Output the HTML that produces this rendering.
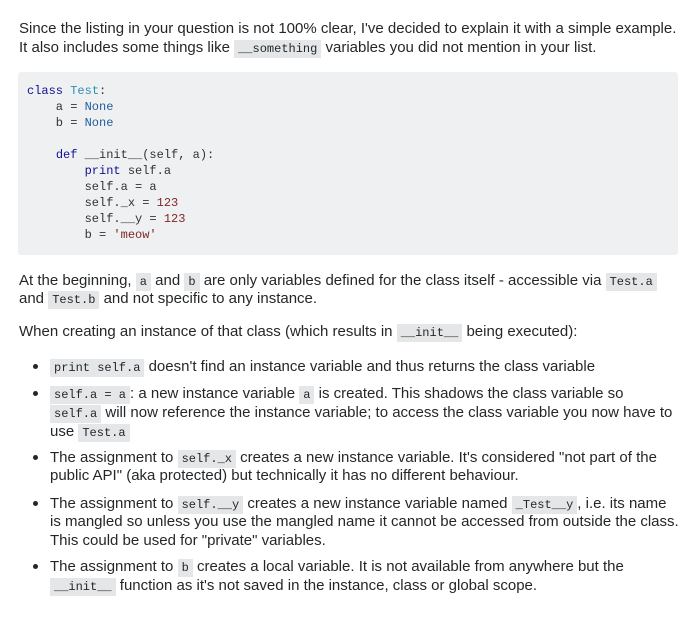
<!DOCTYPE html><html><head><style>
body{margin:0;width:698px;height:617px;background:#fff;font-family:"Liberation Sans",sans-serif;font-size:15px;color:#242729;position:relative;overflow:hidden}
.l{position:absolute;left:19px;white-space:nowrap;line-height:19px}
code{font-family:"Liberation Mono",monospace;font-size:12px;background:#e4e6e8;padding:2px 4px;color:#242729}
pre{position:absolute;left:18px;top:72px;width:660px;height:183px;margin:0;background:#eff0f1;border-radius:3px;font-family:"Liberation Mono",monospace;font-size:12px;line-height:16px;color:#303336;padding:11px 0 0 9px;box-sizing:border-box}
.k{color:#101094}.t{color:#2b91af}.n{color:#7d2727}.c{color:#1d5e9c}
.b{position:absolute;left:33px;width:5px;height:5px;border-radius:50%;background:#242729}
.i{left:50px}
</style></head><body>
<div class="l" style="top:19px">Since the listing in your question is not 100% clear, I've decided to explain it with a simple example.</div>
<div class="l" style="top:38px">It also includes some things like <code>__something</code> variables you did not mention in your list.</div>
<pre><span class="k">class</span> <span class="t">Test</span>:
    a = <span class="c">None</span>
    b = <span class="c">None</span>

    <span class="k">def</span> __init__(self, a):
        <span class="k">print</span> self.a
        self.a = a
        self._x = <span class="n">123</span>
        self.__y = <span class="n">123</span>
        b = <span class="n">'meow'</span></pre>
<div class="l" style="top:271px">At the beginning, <code>a</code> and <code>b</code> are only variables defined for the class itself - accessible via <code>Test.a</code></div>
<div class="l" style="top:289px">and <code>Test.b</code> and not specific to any instance.</div>
<div class="l" style="top:322px">When creating an instance of that class (which results in <code>__init__</code> being executed):</div>
<div class="b" style="top:364px"></div><div class="l i" style="top:357px"><code>print self.a</code> doesn't find an instance variable and thus returns the class variable</div>
<div class="b" style="top:391px"></div><div class="l i" style="top:384px"><code>self.a = a</code>: a new instance variable <code>a</code> is created. This shadows the class variable so</div>
<div class="l i" style="top:403px"><code>self.a</code> will now reference the instance variable; to access the class variable you now have to</div>
<div class="l i" style="top:422px">use <code>Test.a</code></div>
<div class="b" style="top:455px"></div><div class="l i" style="top:448px">The assignment to <code>self._x</code> creates a new instance variable. It's considered "not part of the</div>
<div class="l i" style="top:466px">public API" (aka protected) but technically it has no different behaviour.</div>
<div class="b" style="top:501px"></div><div class="l i" style="top:494px">The assignment to <code>self.__y</code> creates a new instance variable named <code>_Test__y</code>, i.e. its name</div>
<div class="l i" style="top:512px">is mangled so unless you use the mangled name it cannot be accessed from outside the class.</div>
<div class="l i" style="top:531px">This could be used for "private" variables.</div>
<div class="b" style="top:564px"></div><div class="l i" style="top:557px">The assignment to <code>b</code> creates a local variable. It is not available from anywhere but the</div>
<div class="l i" style="top:576px"><code>__init__</code> function as it's not saved in the instance, class or global scope.</div>
</body></html>
